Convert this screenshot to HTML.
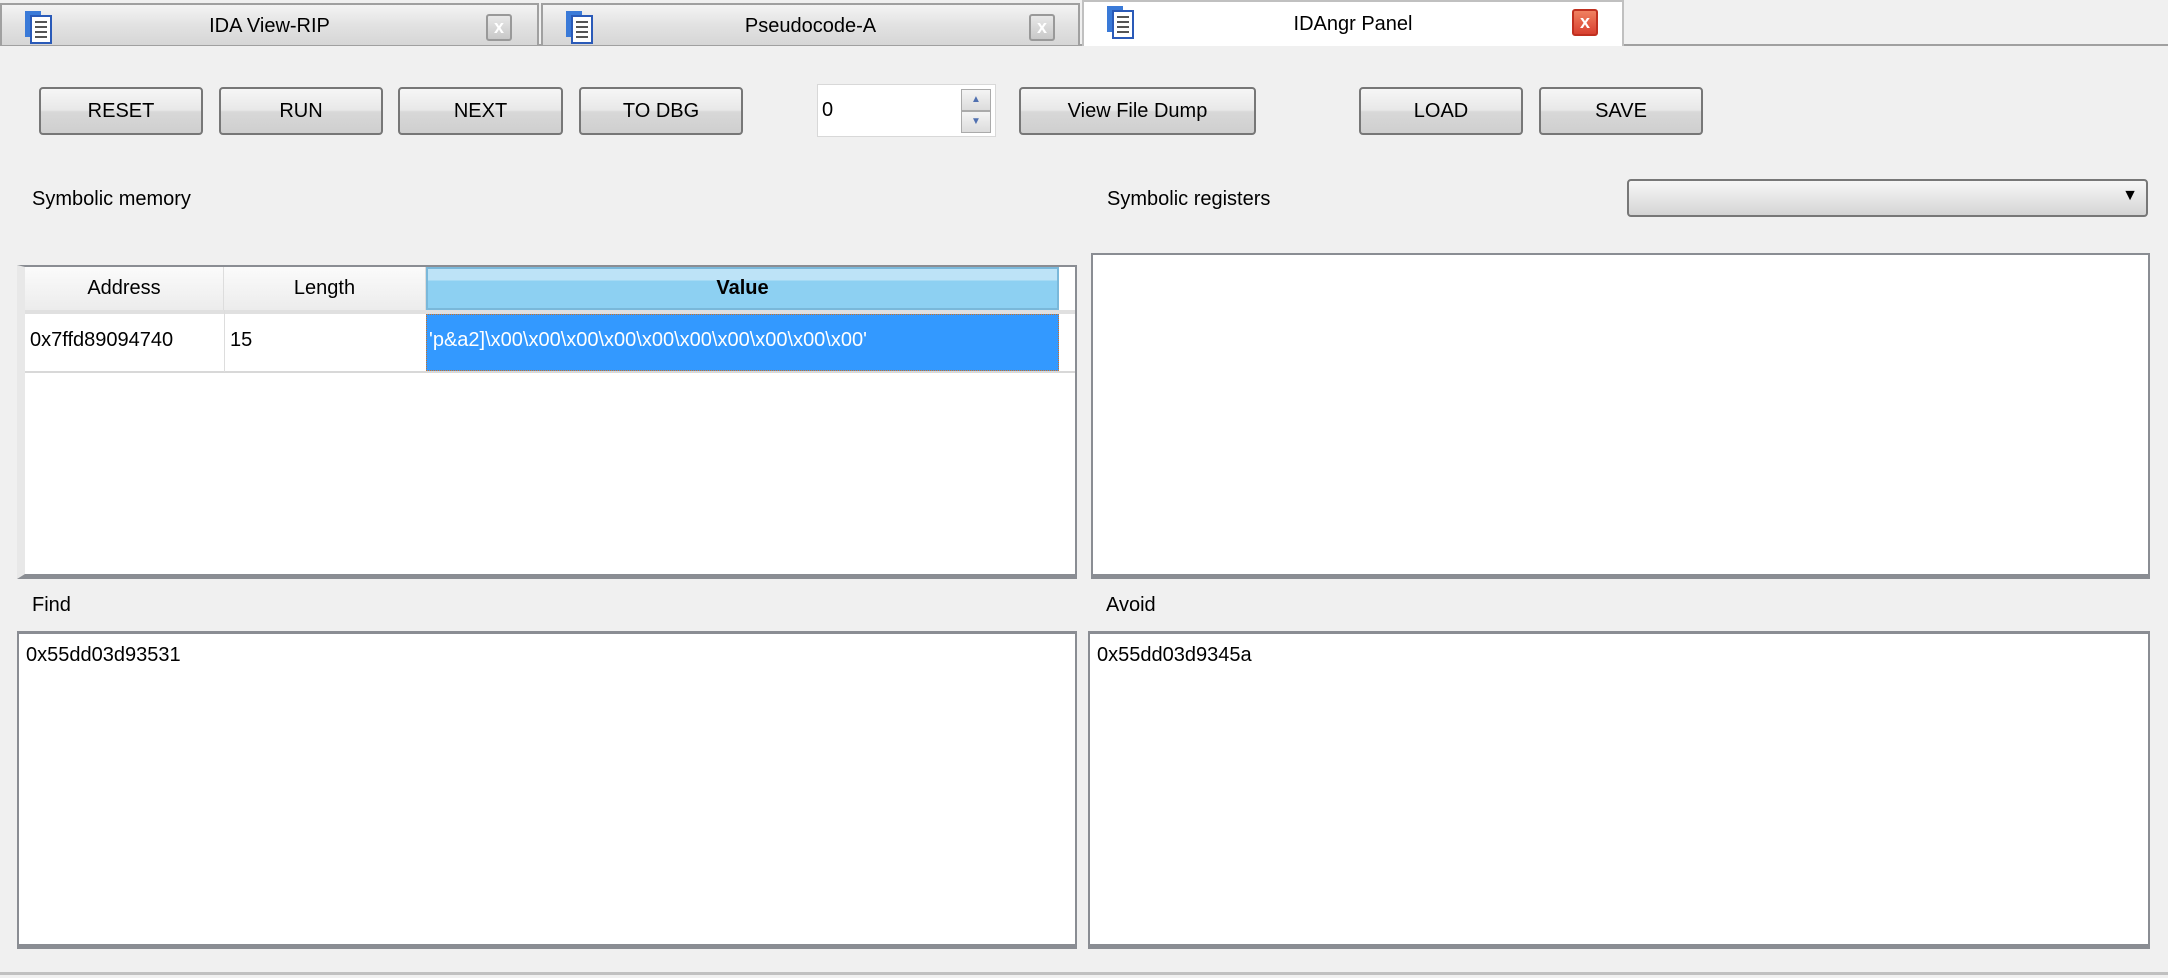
<!DOCTYPE html>
<html><head><meta charset="utf-8"><style>
*{box-sizing:border-box;margin:0;padding:0}
body{width:2168px;height:978px;background:#f0f0f0;font-family:"Liberation Sans",sans-serif;font-size:20px;color:#000;position:relative;overflow:hidden}
.a{position:absolute}
.tab{position:absolute;top:3px;height:42px;border:2px solid #a0a0a0;border-bottom:none;background:linear-gradient(#f4f4f4,#e2e2e2 50%,#d6d6d6);}
.tab span{position:absolute;top:10px;width:100%;text-align:center;left:0}
.ico{position:absolute;left:21px;top:5px;width:32px;height:34px}
.cls{position:absolute;width:26px;height:27px;top:9px;border:2px solid #999;background:linear-gradient(#e8e8e8,#c8c8c8);color:#fff;font-size:18px;font-weight:bold;text-align:center;line-height:22px;border-radius:3px}
.btn{position:absolute;top:87px;height:48px;border:2px solid #777;border-radius:4px;background:linear-gradient(#f6f6f6,#e8e8e8 48%,#d8d8d8 52%,#cfcfcf);text-align:center;line-height:44px}
.box{position:absolute;background:#fff;border:2px solid #8a8d93;border-bottom-width:5px}
.lbl{position:absolute}
</style></head><body>
<div class="a" style="left:0;top:44px;width:2168px;height:2px;background:#a0a0a0"></div>
<div class="tab" style="left:0;width:539px"><svg class="ico" viewBox="0 0 32 34"><rect x="2" y="1" width="16" height="26" fill="#3a7ad8"/><rect x="8" y="6" width="20" height="27" fill="#fff" stroke="#2a5ab8" stroke-width="2"/><g stroke="#555" stroke-width="2"><line x1="12" y1="12" x2="24" y2="12"/><line x1="12" y1="17" x2="24" y2="17"/><line x1="12" y1="22" x2="24" y2="22"/><line x1="12" y1="27" x2="24" y2="27"/></g></svg><span>IDA View-RIP</span><div class="cls" style="left:484px">x</div></div>
<div class="tab" style="left:541px;width:539px"><svg class="ico" viewBox="0 0 32 34"><rect x="2" y="1" width="16" height="26" fill="#3a7ad8"/><rect x="8" y="6" width="20" height="27" fill="#fff" stroke="#2a5ab8" stroke-width="2"/><g stroke="#555" stroke-width="2"><line x1="12" y1="12" x2="24" y2="12"/><line x1="12" y1="17" x2="24" y2="17"/><line x1="12" y1="22" x2="24" y2="22"/><line x1="12" y1="27" x2="24" y2="27"/></g></svg><span>Pseudocode-A</span><div class="cls" style="left:486px">x</div></div>
<div class="tab" style="left:1082px;top:0;width:542px;height:46px;background:#fff;border-color:#c0c0c0"><svg class="ico" style="top:3px" viewBox="0 0 32 34"><rect x="2" y="1" width="16" height="26" fill="#3a7ad8"/><rect x="8" y="6" width="20" height="27" fill="#fff" stroke="#2a5ab8" stroke-width="2"/><g stroke="#555" stroke-width="2"><line x1="12" y1="12" x2="24" y2="12"/><line x1="12" y1="17" x2="24" y2="17"/><line x1="12" y1="22" x2="24" y2="22"/><line x1="12" y1="27" x2="24" y2="27"/></g></svg><span style="top:11px">IDAngr Panel</span><div class="cls" style="left:488px;top:7px;background:linear-gradient(#f08060,#d84030);border-color:#c03020">x</div></div>

<div class="btn" style="left:39px;width:164px">RESET</div>
<div class="btn" style="left:219px;width:164px">RUN</div>
<div class="btn" style="left:398px;width:165px">NEXT</div>
<div class="btn" style="left:579px;width:164px">TO DBG</div>
<div class="a" style="left:817px;top:84px;width:179px;height:53px;background:#fff;border:1px solid #d8d8d8"><span class="a" style="left:4px;top:14px">0</span>
<div class="a" style="left:143px;top:4px;width:30px;height:22px;border:1px solid #aaa;background:linear-gradient(#f4f4f4,#dcdcdc);font-size:10px;color:#5070b0;text-align:center;line-height:20px">▲</div>
<div class="a" style="left:143px;top:26px;width:30px;height:22px;border:1px solid #aaa;background:linear-gradient(#f4f4f4,#dcdcdc);font-size:10px;color:#5070b0;text-align:center;line-height:20px">▼</div></div>
<div class="btn" style="left:1019px;width:237px">View File Dump</div>
<div class="btn" style="left:1359px;width:164px">LOAD</div>
<div class="btn" style="left:1539px;width:164px">SAVE</div>

<div class="lbl" style="left:32px;top:188px">Symbolic memory</div>
<div class="lbl" style="left:1107px;top:188px">Symbolic registers</div>
<div class="a" style="left:1627px;top:179px;width:521px;height:38px;border:2px solid #777;border-radius:4px;background:linear-gradient(#f6f6f6,#e6e6e6 50%,#d4d4d4)"><span class="a" style="right:8px;top:6px;font-size:16px">▼</span></div>

<div class="box" style="left:17px;top:265px;width:1060px;height:314px;border-left-width:8px;border-left-color:#e8e8e8">
<div class="a" style="left:0;top:0;width:199px;height:43px;background:linear-gradient(#fbfbfb,#ececec);border-right:1px solid #ddd;text-align:center;line-height:42px">Address</div>
<div class="a" style="left:199px;top:0;width:202px;height:43px;background:linear-gradient(#fbfbfb,#ececec);border-right:1px solid #ddd;text-align:center;line-height:42px">Length</div>
<div class="a" style="left:401px;top:0;width:633px;height:43px;background:linear-gradient(#bde3f7 30%,#8dd0f2 30%);border:2px solid #7ab8da;text-align:center;line-height:38px;font-weight:bold">Value</div>
<div class="a" style="left:0;top:43px;width:1050px;height:4px;background:#e0e0e0"></div>
<div class="a" style="left:0;top:104px;width:1050px;height:2px;background:#d8d8d8"></div>
<div class="a" style="left:199px;top:43px;width:1px;height:62px;background:#ddd"></div>
<div class="a" style="left:5px;top:62px">0x7ffd89094740</div>
<div class="a" style="left:205px;top:62px">15</div>
<div class="a" style="left:401px;top:47px;width:633px;height:57px;background:#3399ff;border:1px dotted #d07020;color:#fff;padding:14px 0 0 2px">'p&amp;a2]\x00\x00\x00\x00\x00\x00\x00\x00\x00\x00'</div>
</div>
<div class="box" style="left:1091px;top:253px;width:1059px;height:326px"></div>

<div class="lbl" style="left:32px;top:594px">Find</div>
<div class="lbl" style="left:1106px;top:594px">Avoid</div>
<div class="box" style="left:17px;top:631px;width:1060px;height:318px;border-top-width:3px"><span class="a" style="left:7px;top:10px">0x55dd03d93531</span></div>
<div class="box" style="left:1088px;top:631px;width:1062px;height:318px;border-top-width:3px"><span class="a" style="left:7px;top:10px">0x55dd03d9345a</span></div>
<div class="a" style="left:0;top:972px;width:2168px;height:3px;background:#c0c0c0"></div>
</body></html>
